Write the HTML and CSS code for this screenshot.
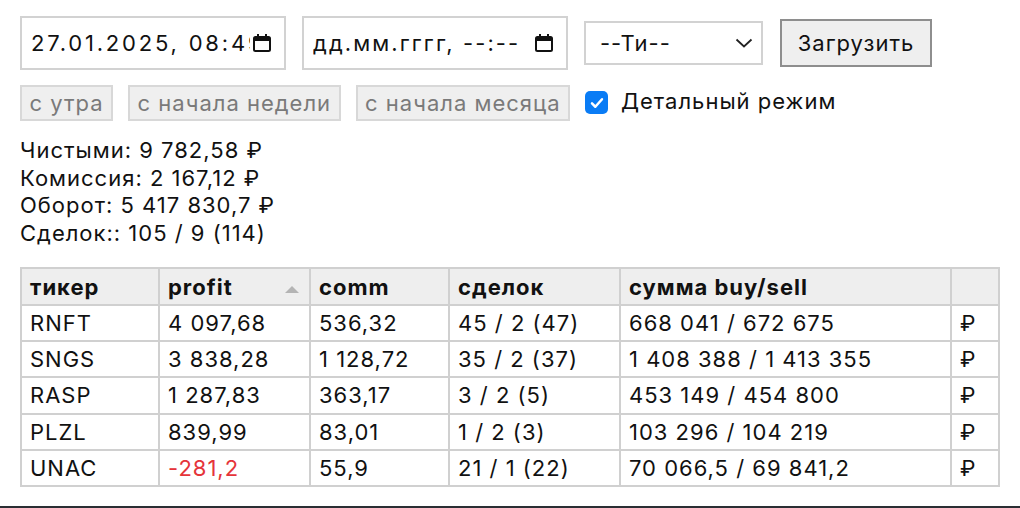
FILE: index.html
```html
<!DOCTYPE html>
<html lang="ru">
<head>
<meta charset="utf-8">
<title>Сделки</title>
<link rel="stylesheet" href="styles.css">
</head>
<body>
<div class="page">
  <div class="toolbar">
    <div class="dt-field dt-from">
      <span class="dt-text">27.01.2025, 08:49</span>
      <svg class="cal" viewBox="0 0 20 20" width="20" height="20"><rect x="2" y="4" width="16" height="14" rx="1.5" fill="none" stroke="#111" stroke-width="2"/><rect x="2" y="4" width="16" height="4" fill="#111"/><rect x="5" y="1" width="2" height="4" fill="#111"/><rect x="13" y="1" width="2" height="4" fill="#111"/></svg>
    </div>
    <div class="dt-field dt-to">
      <span class="dt-text">дд.мм.гггг, --:--</span>
      <svg class="cal" viewBox="0 0 20 20" width="20" height="20"><rect x="2" y="4" width="16" height="14" rx="1.5" fill="none" stroke="#111" stroke-width="2"/><rect x="2" y="4" width="16" height="4" fill="#111"/><rect x="5" y="1" width="2" height="4" fill="#111"/><rect x="13" y="1" width="2" height="4" fill="#111"/></svg>
    </div>
    <div class="select">
      <span>--Ти--</span>
      <svg class="chev" viewBox="0 0 18 10" width="18" height="10"><path d="M1.5 1.5 L9 8.5 L16.5 1.5" fill="none" stroke="#222" stroke-width="1.8"/></svg>
    </div>
    <button class="btn-load">Загрузить</button>
  </div>

  <div class="presets">
    <button class="preset" disabled>с утра</button>
    <button class="preset" disabled>с начала недели</button>
    <button class="preset" disabled>с начала месяца</button>
    <label class="detail">
      <span class="check"><svg viewBox="0 0 24 24" width="24" height="24"><path d="M6 12.5 L10 16.5 L18 7.5" fill="none" stroke="#fff" stroke-width="3" stroke-linecap="round" stroke-linejoin="round"/></svg></span>
      Детальный режим
    </label>
  </div>

  <div class="summary">
    <div>Чистыми: 9 782,58 ₽</div>
    <div>Комиссия: 2 167,12 ₽</div>
    <div>Оборот: 5 417 830,7 ₽</div>
    <div>Сделок:: 105 / 9 (114)</div>
  </div>

  <table class="deals">
    <colgroup>
      <col class="c1"><col class="c2"><col class="c3"><col class="c4"><col class="c5"><col class="c6">
    </colgroup>
    <thead>
      <tr>
        <th>тикер</th>
        <th><div class="sorted">profit<span class="arrow"></span></div></th>
        <th>comm</th>
        <th>сделок</th>
        <th>сумма buy/sell</th>
        <th></th>
      </tr>
    </thead>
    <tbody>
      <tr><td>RNFT</td><td>4 097,68</td><td>536,32</td><td>45 / 2 (47)</td><td>668 041 / 672 675</td><td>₽</td></tr>
      <tr><td>SNGS</td><td>3 838,28</td><td>1 128,72</td><td>35 / 2 (37)</td><td>1 408 388 / 1 413 355</td><td>₽</td></tr>
      <tr><td>RASP</td><td>1 287,83</td><td>363,17</td><td>3 / 2 (5)</td><td>453 149 / 454 800</td><td>₽</td></tr>
      <tr><td>PLZL</td><td>839,99</td><td>83,01</td><td>1 / 2 (3)</td><td>103 296 / 104 219</td><td>₽</td></tr>
      <tr><td>UNAC</td><td class="neg">-281,2</td><td>55,9</td><td>21 / 1 (22)</td><td>70 066,5 / 69 841,2</td><td>₽</td></tr>
    </tbody>
  </table>
</div>
<div class="bottom-bar"></div>
</body>
</html>
```

FILE: styles.css
```css
html, body {
  margin: 0;
  padding: 0;
  background: #fff;
}

body {
  font-family: Inter, "Liberation Sans", Arial, sans-serif;
  font-size: 22px;
  letter-spacing: 1px;
  color: #111;
  width: 1020px;
  height: 508px;
  overflow: hidden;
  display: flex;
  flex-direction: column;
}

.page {
  padding: 16px 20px 0 20px;
  flex: 1;
}

/* top row: period inputs, ticker select, load button */
.toolbar {
  display: flex;
  align-items: center;
  gap: 16px;
  height: 54px;
}

.dt-field {
  box-sizing: border-box;
  width: 266px;
  height: 54px;
  border: 2px solid #d2d2d2;
  display: flex;
  align-items: center;
  padding: 0 12px 0 9px;
  gap: 2px;
  overflow: hidden;
}

.dt-from { letter-spacing: 2.8px; }
.dt-to { letter-spacing: 2.1px; }

.dt-text {
  flex: 1;
  white-space: nowrap;
  overflow: hidden;
}

.cal {
  flex: none;
}

.select {
  box-sizing: border-box;
  width: 179px;
  height: 44px;
  border: 2px solid #d2d2d2;
  display: flex;
  align-items: center;
  justify-content: space-between;
  padding: 0 8px 0 14px;
}

.btn-load {
  box-sizing: border-box;
  width: 152px;
  height: 48px;
  margin-left: 1px;
  background: #efefef;
  border: 2px solid #8e8e8e;
  border-radius: 0;
  font-family: inherit;
  font-size: 22px;
  letter-spacing: 1px;
  color: #111;
  padding: 0;
}

/* second row: quick period buttons and detail toggle */
.presets {
  display: flex;
  align-items: center;
  gap: 15px;
  margin-top: 15px;
  height: 36px;
}

.preset {
  box-sizing: border-box;
  height: 36px;
  padding: 0 7.5px;
  background: #efefef;
  border: 2px solid #d8d8d8;
  border-radius: 0;
  font-family: inherit;
  font-size: 22px;
  letter-spacing: 1px;
  color: #7a7a7a;
}

.detail {
  display: flex;
  align-items: center;
  gap: 13px;
  margin-left: 0;
  margin-top: -4px;
}

.check {
  width: 23px;
  height: 23px;
  border-radius: 5px;
  background: #0a7cf5;
  display: flex;
  align-items: center;
  justify-content: center;
  margin-top: 3px;
}

.check svg {
  width: 20px;
  height: 20px;
}

/* totals */
.summary {
  margin-top: 16px;
  line-height: 27.5px;
}

/* deals table */
.deals {
  margin-top: 20px;
  border-collapse: collapse;
  width: 978px;
  table-layout: fixed;
}

.c1 { width: 138px; }
.c2 { width: 151px; }
.c3 { width: 139px; }
.c4 { width: 171px; }
.c5 { width: 331px; }
.c6 { width: 48px; }

.deals th,
.deals td {
  border: 2px solid #d0d0d0;
  padding: 0 10px 0 8px;
  text-align: left;
  white-space: nowrap;
}

.deals th {
  height: 35px;
  background: #eeeeee;
  font-weight: bold;
}

.deals td {
  height: 34.2px;
}

.sorted {
  display: flex;
  align-items: center;
  justify-content: space-between;
}

.arrow {
  width: 0;
  height: 0;
  border-left: 7px solid transparent;
  border-right: 7px solid transparent;
  border-bottom: 7px solid #b4b4b4;
  margin-top: 6px;
  margin-right: 0;
}

.neg {
  color: #e5343a;
}

.bottom-bar {
  height: 2px;
  background: #2a2e33;
  flex: none;
}
```
